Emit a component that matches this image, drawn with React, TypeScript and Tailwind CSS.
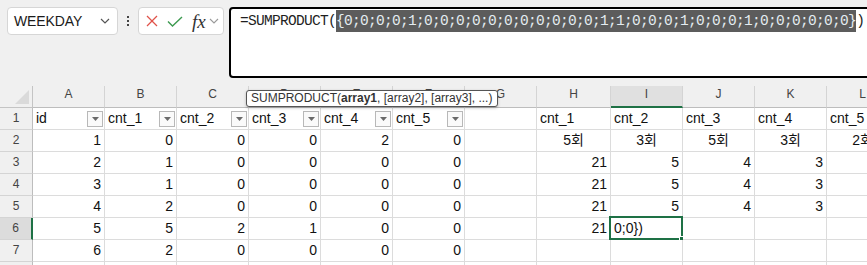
type CellData = { v?: string; align?: "l" | "r" | "c"; filter?: boolean };

const COLS = ["A", "B", "C", "D", "E", "F", "G", "H", "I", "J", "K", "L"];
const WIDTHS = ["w-[72px]", "w-[72px]", "w-[72px]", "w-[72px]", "w-[72px]", "w-[72px]", "w-[72px]", "w-[74px]", "w-[72px]", "w-[72px]", "w-[72px]", "w-[72px]"];

const head = (v: string): CellData => ({ v, align: "l", filter: true });
const num = (v: string): CellData => ({ v, align: "r" });

const ROWS: CellData[][] = [
  [head("id"), head("cnt_1"), head("cnt_2"), head("cnt_3"), head("cnt_4"), head("cnt_5"), {}, { v: "cnt_1", align: "l" }, { v: "cnt_2", align: "l" }, { v: "cnt_3", align: "l" }, { v: "cnt_4", align: "l" }, { v: "cnt_5", align: "l" }],
  [num("1"), num("0"), num("0"), num("0"), num("2"), num("0"), {}, { v: "5회", align: "c" }, { v: "3회", align: "c" }, { v: "5회", align: "c" }, { v: "3회", align: "c" }, { v: "2회", align: "c" }],
  [num("2"), num("1"), num("0"), num("0"), num("0"), num("0"), {}, num("21"), num("5"), num("4"), num("3"), {}],
  [num("3"), num("1"), num("0"), num("0"), num("0"), num("0"), {}, num("21"), num("5"), num("4"), num("3"), {}],
  [num("4"), num("2"), num("0"), num("0"), num("0"), num("0"), {}, num("21"), num("5"), num("4"), num("3"), {}],
  [num("5"), num("5"), num("2"), num("1"), num("0"), num("0"), {}, num("21"), { v: "0;0})", align: "l" }, {}, {}, {}],
  [num("6"), num("2"), num("0"), num("0"), num("0"), num("0"), {}, {}, {}, {}, {}, {}],
  [{}, {}, {}, {}, {}, {}, {}, {}, {}, {}, {}, {}],
];

const FilterButton = () => (
  <div className="w-[16px] h-[16px] mr-[1px] shrink-0 border border-[#b8b8b8] bg-[#fafafa] flex items-center justify-center">
    <svg width="7" height="4" viewBox="0 0 7 4">
      <polygon points="0,0 7,0 3.5,4" fill="#6a6a6a" />
    </svg>
  </div>
);

const Cell = ({ c, w, selected }: { c: CellData; w: string; selected?: boolean }) => (
  <div
    className={`${w} h-[22px] shrink-0 relative border-r border-b border-[#dcdcdc] bg-white flex items-center text-[14px] leading-[21px] text-[#111] ${
      c.align === "r" ? "justify-end pr-[3px]" : c.align === "c" ? "justify-center" : "justify-between pl-[3px]"
    }`}
  >
    <span className="whitespace-nowrap">{c.v}</span>
    {c.filter && <FilterButton />}
    {selected && (
      <div className="absolute left-[-2px] top-[-2px] w-[74px] h-[24px] border-2 border-[#1e7145]">
        <div className="absolute right-[-3px] bottom-[-3px] w-[5px] h-[5px] bg-[#1e7145] border border-white" />
      </div>
    )}
  </div>
);

export default function App() {
  return (
    <div className="w-[867px] h-[265px] overflow-hidden bg-[#f0f0f0] font-['Liberation_Sans','Noto_Sans_CJK_KR',sans-serif] relative">
      {/* formula bar */}
      <div className="h-[86px] flex items-start pt-[7px] pl-[7px]">
        <div className="w-[111px] h-[28px] shrink-0 rounded-[4px] border border-[#d6d6d6] bg-white flex items-center justify-between pl-[6px] pr-[7px]">
          <span className="text-[14px] text-[#1a1a1a] tracking-[-0.1px]">WEEKDAY</span>
          <svg width="10" height="6" viewBox="0 0 10 6">
            <polyline points="1,1 5,5 9,1" fill="none" stroke="#555" strokeWidth="1.2" />
          </svg>
        </div>
        <div className="w-[20px] h-[28px] shrink-0 flex flex-col items-center justify-center gap-[2px]">
          <div className="w-[2px] h-[2px] bg-[#444]" />
          <div className="w-[2px] h-[2px] bg-[#444]" />
          <div className="w-[2px] h-[2px] bg-[#444]" />
        </div>
        <div className="w-[86px] h-[28px] shrink-0 rounded-[4px] border border-[#d6d6d6] bg-white flex items-center pl-[7px]">
          <svg width="12" height="12" viewBox="0 0 12 12">
            <line x1="1" y1="1" x2="11" y2="11" stroke="#e0534a" strokeWidth="1.3" />
            <line x1="11" y1="1" x2="1" y2="11" stroke="#e0534a" strokeWidth="1.3" />
          </svg>
          <svg className="ml-[9px]" width="16" height="11" viewBox="0 0 16 11">
            <polyline points="1,5.5 5.5,10 15,1" fill="none" stroke="#3d9a50" strokeWidth="1.4" />
          </svg>
          <span className="ml-[9px] font-['Liberation_Serif',serif] italic text-[19px] leading-none text-[#333]">fx</span>
          <svg className="ml-[3px]" width="10" height="6" viewBox="0 0 10 6">
            <polyline points="1,1 5,5 9,1" fill="none" stroke="#9a9a9a" strokeWidth="1.1" />
          </svg>
        </div>
        <div className="ml-[5px] w-[700px] h-[71px] shrink-0 rounded-[4px] border-2 border-black bg-white pl-[9px] pt-[1px]">
          <div className="font-['Liberation_Mono',monospace] text-[14.5px] tracking-[-0.7px] leading-[22px] text-[#1f1f1f] whitespace-nowrap">
            =SUMPRODUCT(
            <span className="inline-block bg-[#5c5c5c] text-[#e4ecf0]">
              {"{0;0;0;0;1;0;0;0;0;0;0;0;0;0;0;0;1;1;0;0;0;1;0;0;0;1;0;0;0;0;0;0}"}
            </span>
            )
          </div>
        </div>
      </div>

      {/* column headers */}
      <div className="flex">
        <div className="w-[33px] h-[22px] shrink-0 border-r border-b border-[#c4c4c4] flex items-end justify-end pr-[3px] pb-[3px]">
          <svg width="14" height="14" viewBox="0 0 14 14">
            <polygon points="14,0 14,14 0,14" fill="#dadada" />
          </svg>
        </div>
        {COLS.map((c, i) => (
          <div
            key={c}
            className={`${WIDTHS[i]} h-[22px] shrink-0 text-center text-[12px] leading-[16px] text-[#444] border-r ${
              c === "I" ? "bg-[#e0e0e0] border-b-2 border-b-[#1e7145] border-r-[#d4d4d4]" : "border-b border-b-[#bdbdbd] border-r-[#d4d4d4]"
            }`}
          >
            {c}
          </div>
        ))}
      </div>

      {/* rows */}
      {ROWS.map((row, r) => (
        <div key={r} className="flex">
          <div
            className={`w-[33px] h-[22px] shrink-0 border-b border-b-[#d4d4d4] text-center text-[12px] leading-[21px] text-[#444] ${
              r === 5 ? "bg-[#dcdcdc] border-r-2 border-r-[#1e7145]" : "border-r border-r-[#bdbdbd]"
            }`}
          >
            {r + 1}
          </div>
          {row.map((c, i) => (
            <Cell key={i} c={c} w={WIDTHS[i]} selected={r === 5 && i === 8} />
          ))}
        </div>
      ))}

      {/* function argument tooltip */}
      <div className="absolute left-[246px] top-[90px] w-[252px] h-[17px] rounded-[3px] border border-[#555] bg-white shadow-[0_1px_3px_rgba(0,0,0,0.25)] pl-[4px] text-[12px] leading-[15px] text-[#333] whitespace-nowrap">
        SUMPRODUCT(<span className="font-bold">array1</span>, [array2], [array3], ...)
      </div>
    </div>
  );
}
